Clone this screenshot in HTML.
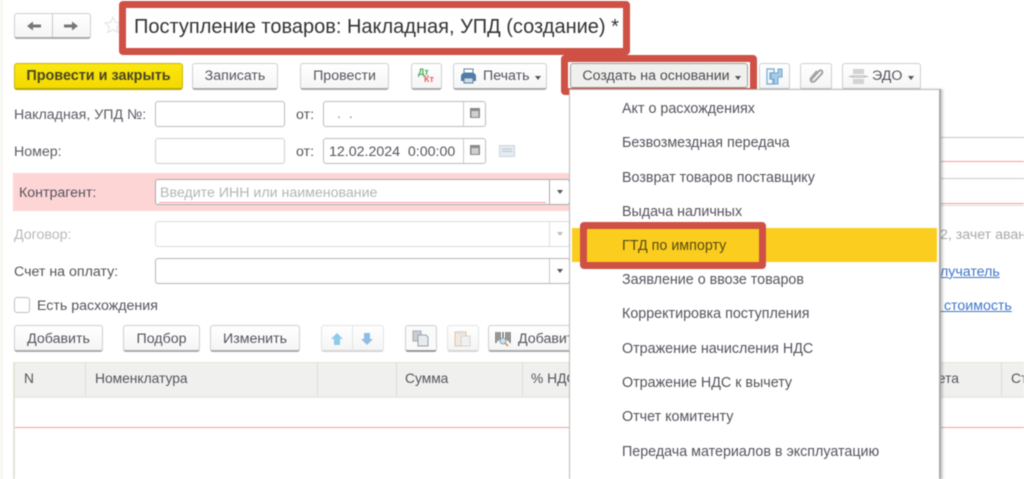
<!DOCTYPE html>
<html lang="ru"><head><meta charset="utf-8"><title>Поступление товаров</title>
<style>
html,body{margin:0;padding:0;background:#fff}
#p{position:relative;width:1024px;height:479px;overflow:hidden;background:#fff;font-family:"Liberation Sans",sans-serif;font-size:14.2px;color:#57535c;filter:blur(.5px)}
#p div,#p span.a,#p svg{position:absolute;box-sizing:border-box}
.b{background:linear-gradient(#fff,#f5f5f5);border:1px solid #cfcfcf;border-bottom:2px solid #aaa;border-radius:3px;height:27px;line-height:25px;text-align:center;white-space:nowrap}
.i{background:#fff;border:1px solid #bdbdbd;border-radius:3px}
.t{white-space:nowrap;line-height:16px;margin-top:1px}
.sep{width:1px;background:#c8c8c8}
.red{border:7px solid #cf5044;border-radius:4px}
.arr{width:0;height:0;border-left:3px solid transparent;border-right:3px solid transparent;border-top:4px solid #555}
.th{background:#f0f0ee;height:33px;top:363px;border-right:1px solid #dcdcda;line-height:31px;padding-left:9px;white-space:nowrap;overflow:hidden;font-size:13.8px}
.m{left:622px;white-space:nowrap;line-height:16px;font-size:14.3px}
.dot{height:1px;background:#f59fa4}
a{color:#3f77c9;text-decoration:underline}
</style></head><body><div id="p">

<div style="left:0;top:0;width:3px;height:479px;background:#f7f6f1"></div>

<!-- nav -->
<div class="b" style="left:14px;top:13px;width:77px;height:26px"></div>
<div class="sep" style="left:52px;top:14px;height:23px"></div>
<svg style="left:26px;top:19px" width="16" height="14" viewBox="0 0 16 14"><path d="M1 7l6-4.500v3h8v3H7v3z" fill="#777"/></svg>
<svg style="left:63px;top:19px" width="16" height="14" viewBox="0 0 16 14"><path d="M15 7L9 2.500v3H1v3h8v3z" fill="#777"/></svg>
<svg style="left:104px;top:16px" width="18" height="18" viewBox="0 0 18 18"><path d="M9 1l2.400 5.400 5.600.6-4.200 3.800 1.200 5.700L9 13.600 4 16.500l1.200-5.700L1 7l5.600-.6z" fill="none" stroke="#e6e6e6" stroke-width="1.200"/></svg>

<div class="t" style="left:134px;top:15px;font-size:20px;line-height:22px;color:#333">Поступление товаров: Накладная, УПД (создание) *</div>
<div class="red" style="left:119px;top:1px;width:511px;height:54px"></div>

<!-- toolbar -->
<div class="b" style="left:14px;top:63px;width:169px;background:linear-gradient(#fbe711,#f3d900);border:1px solid #cdb800;border-bottom:2px solid #b9a700;font-weight:bold;color:#4a4620;font-size:14.4px">Провести и закрыть</div>
<div class="b" style="left:192px;top:63px;width:86px">Записать</div>
<div class="b" style="left:300px;top:63px;width:89px">Провести</div>
<div class="b" style="left:411px;top:63px;width:31px"></div>
<span class="a" style="left:418px;top:68px;font-size:9px;font-weight:bold;color:#48ad5c;line-height:9px">Дт</span>
<span class="a" style="left:424px;top:75px;font-size:9px;font-weight:bold;color:#ef5e5e;line-height:9px">Кт</span>
<div class="b" style="left:453px;top:63px;width:94px;text-align:left;padding-left:29px">Печать</div>
<svg style="left:460px;top:68px" width="17" height="16" viewBox="0 0 17 16"><path d="M4 1h9v4H4z" fill="#fff" stroke="#5d7f9f"/><path d="M1 9q0-4 3-4h9q3 0 3 4v4h-3v-3H4v3H1z" fill="#4f7ca8"/><path d="M4 10h9v5H4z" fill="#cfdbe6" stroke="#5d7f9f"/></svg>
<div class="arr" style="left:535px;top:76px"></div>

<div class="b" style="left:570px;top:63px;width:178px;height:25px;background:#f0f0ee;border:1px solid #9a9a9a;line-height:25px;padding-right:6px;color:#4f4b52">Создать на основании</div>
<div class="arr" style="left:735px;top:76px"></div>
<div class="red" style="left:561px;top:55px;width:196px;height:40px"></div>

<div class="b" style="left:759px;top:63px;width:31px;border-bottom-color:#ccc"></div>
<svg style="left:766px;top:68px" width="17" height="17" viewBox="0 0 17 17"><path d="M1 1h7v4H4v6h3v5H1z" fill="none" stroke="#7fb2d8" stroke-width="1.400"/><path d="M5 5h7V1h4v8h-4v7H8v-5H5z" fill="#a9cce6" stroke="#6fa6d0"/></svg>
<div class="b" style="left:800px;top:63px;width:32px;border-bottom-color:#ccc"></div>
<svg style="left:808px;top:68px" width="16" height="16" viewBox="0 0 16 16"><path d="M3 12L11 3q2-1.500 3 0t-.5 3L7 13q-2 1.500-3.500.5T3 10l6-7" fill="none" stroke="#a3a3a3" stroke-width="2"/></svg>
<div class="b" style="left:842px;top:63px;width:79px;text-align:left;padding-left:29px;border-bottom-color:#ccc">ЭДО</div>
<svg style="left:849px;top:68px" width="19" height="17" viewBox="0 0 19 17"><path d="M4 1h11v5H4zM3 7h13v3H3zM4 11h11v5H4z" fill="#d2d2d2"/><path d="M0 8.500h4M15 8.500h4" stroke="#aaa"/></svg>
<div class="arr" style="left:908px;top:76px"></div>

<!-- row 1 -->
<div class="t" style="left:14px;top:106px;color:#5f5b63">Накладная, УПД №:</div>
<div class="i" style="left:155px;top:101px;width:130px;height:26px"></div>
<div class="t" style="left:296px;top:106px">от:</div>
<div class="i" style="left:323px;top:101px;width:163px;height:26px"></div>
<div class="sep" style="left:463px;top:102px;height:24px"></div>
<div class="t" style="left:337px;top:105px;color:#888">.&nbsp;&nbsp;.</div>
<svg style="left:469px;top:106px" width="12" height="13" viewBox="0 0 12 13"><path d="M1 2h10v10H1z" fill="#8a8a8a"/><path d="M2.500 5h7v6h-7z" fill="#cfcfcf"/></svg>

<!-- row 2 -->
<div class="t" style="left:14px;top:143px;color:#5f5b63">Номер:</div>
<div class="i" style="left:155px;top:138px;width:130px;height:26px;border-color:#cfcfcf"></div>
<div class="t" style="left:296px;top:143px">от:</div>
<div class="i" style="left:323px;top:138px;width:163px;height:26px"></div>
<div class="sep" style="left:463px;top:139px;height:24px"></div>
<div class="t" style="left:329px;top:143px">12.02.2024&nbsp; 0:00:00</div>
<svg style="left:469px;top:143px" width="12" height="13" viewBox="0 0 12 13"><path d="M1 2h10v10H1z" fill="#8a8a8a"/><path d="M2.500 5h7v6h-7z" fill="#cfcfcf"/></svg>
<svg style="left:499px;top:145px" width="16" height="12" viewBox="0 0 16 12"><path d="M.5.500h15v11H.5z" fill="#e6ecf1" stroke="#ccd5dc"/><path d="M3 4h10M3 6.500h10" stroke="#b9c4cd"/></svg>

<!-- Контрагент -->
<div style="left:13px;top:173px;width:557px;height:38px;background:#fdd5d5"></div>
<div class="t" style="left:19px;top:184px">Контрагент:</div>
<div class="i" style="left:155px;top:179px;width:415px;height:26px;border-color:#a9a9a9"></div>
<div class="t" style="left:160px;top:184px;color:#b5b5b5">Введите ИНН или наименование</div>
<div class="dot" style="left:159px;top:202px;width:387px"></div>
<div class="sep" style="left:549px;top:180px;height:24px;background:#aaa"></div>
<div class="arr" style="left:557px;top:190px"></div>

<!-- Договор -->
<div class="t" style="left:14px;top:226px;color:#b9b9b9">Договор:</div>
<div class="i" style="left:155px;top:221px;width:415px;height:26px;border-color:#dcdcdc"></div>
<div class="sep" style="left:549px;top:222px;height:24px;background:#e0e0e0"></div>
<div class="arr" style="left:557px;top:232px;border-top-color:#bbb"></div>

<!-- Счет -->
<div class="t" style="left:14px;top:263px">Счет на оплату:</div>
<div class="i" style="left:155px;top:258px;width:415px;height:26px;border-color:#b5b5b5"></div>
<div class="sep" style="left:549px;top:259px;height:24px"></div>
<div class="arr" style="left:557px;top:269px"></div>

<!-- check -->
<div class="i" style="left:14px;top:297px;width:16px;height:16px;border-color:#c0c0c0"></div>
<div class="t" style="left:37px;top:297px">Есть расхождения</div>

<!-- right fragments -->
<div class="dot" style="left:940px;top:161px;width:84px"></div>
<div style="left:940px;top:137px;width:84px;height:1px;background:#c9c4c4"></div>
<div style="left:940px;top:178px;width:84px;height:1px;background:#c9c9c9"></div>
<div class="dot" style="left:940px;top:203px;width:84px"></div>
<div style="left:940px;top:205px;width:84px;height:1px;background:#ddd"></div>
<div class="t" style="left:940px;top:226px;color:#aaa;width:84px;overflow:hidden">2, зачет аванса</div>
<div class="t" style="left:940px;top:263px;width:84px;overflow:hidden"><a>лучатель</a></div>
<div class="t" style="left:940px;top:297px;width:84px;overflow:hidden"><a>&nbsp;стоимость</a></div>

<!-- table toolbar -->
<div class="b" style="left:14px;top:325px;width:89px;line-height:27px">Добавить</div>
<div class="b" style="left:123px;top:325px;width:77px;line-height:27px">Подбор</div>
<div class="b" style="left:210px;top:325px;width:90px;line-height:27px">Изменить</div>
<div class="b" style="left:321px;top:325px;width:63px;border-color:#e4e4e4;border-bottom-color:#d5d5d5"></div>
<div class="sep" style="left:352px;top:326px;height:25px;background:#e4e4e4"></div>
<svg style="left:330px;top:332px" width="14" height="14" viewBox="0 0 14 14"><path d="M7 1l6 6H10v6H4V7H1z" fill="#8ecbe9"/></svg>
<svg style="left:360px;top:332px" width="14" height="14" viewBox="0 0 14 14"><path d="M7 13l6-6H10V1H4v6H1z" fill="#8dbde6"/></svg>
<div class="b" style="left:405px;top:325px;width:32px;background:#fafafa;border-bottom-color:#999"></div>
<svg style="left:412px;top:330px" width="18" height="17" viewBox="0 0 18 17"><path d="M1 1h8v10H1z" fill="#c9cdd3" stroke="#a5abb2"/><path d="M6 5h8l2 2v9H6z" fill="#e6ebf0" stroke="#98a1aa"/></svg>
<div class="b" style="left:447px;top:325px;width:32px;border-color:#e4e4e4;border-bottom-color:#d5d5d5"></div>
<svg style="left:454px;top:330px" width="18" height="17" viewBox="0 0 18 17"><path d="M1 2h11v14H1z" fill="#f3e9de" stroke="#d9c6b3"/><path d="M4 1h5v3H4z" fill="#ddd"/><path d="M7 6h9v10H7z" fill="#f1f1f1" stroke="#d4d4d4"/></svg>
<div class="b" style="left:488px;top:325px;width:90px;text-align:left;padding-left:29px;line-height:27px">Добавить</div>
<svg style="left:495px;top:331px" width="16" height="16" viewBox="0 0 16 16"><path d="M1 1v11M3 1v9M5 1v8M8 1v6M11 1v8M13 1v9M15 1v11" stroke="#555" stroke-width="1.200"/><circle cx="8" cy="10" r="3" fill="#cfe0ee" stroke="#8aa"/><path d="M10 12l3 3" stroke="#c58b4a" stroke-width="1.500"/></svg>

<!-- table -->
<div style="left:13px;top:362px;width:1011px;height:1px;background:#e5e3d8"></div>
<div style="left:13px;top:362px;width:2px;height:117px;background:#e5e3d8"></div>
<div class="th" style="left:15px;width:71px">N</div>
<div class="th" style="left:86px;width:232px">Номенклатура</div>
<div class="th" style="left:318px;width:79px"></div>
<div class="th" style="left:397px;width:126px;padding-left:8px">Сумма</div>
<div class="th" style="left:523px;width:47px;padding-left:8px;border-right:0">% НДС</div>
<div class="th" style="left:940px;width:62px;padding-left:0;text-indent:-16px">счета</div>
<div class="th" style="left:1002px;width:22px;border-right:0">Ст</div>
<div style="left:15px;top:396px;width:1009px;height:2px;background:#e9e9e9"></div>
<div class="dot" style="left:15px;top:427px;width:1009px"></div>

<!-- menu -->
<div style="left:569px;top:89px;width:372px;height:395px;background:#fff;border:1px solid #b9b9b9;border-right:2px solid #a8a8a8;box-shadow:2px 0 2px rgba(0,0,0,.18)"></div>
<div class="t m" style="top:100px">Акт о расхождениях</div>
<div class="t m" style="top:134px">Безвозмездная передача</div>
<div class="t m" style="top:169px">Возврат товаров поставщику</div>
<div class="t m" style="top:203px">Выдача наличных</div>
<div style="left:572px;top:228px;width:365px;height:34px;background:#fbcd1f"></div>
<div class="t m" style="top:237px;color:#5a4a14">ГТД по импорту</div>
<div class="red" style="left:580px;top:222px;width:186px;height:47px"></div>
<div class="t m" style="top:271px">Заявление о ввозе товаров</div>
<div class="t m" style="top:305px">Корректировка поступления</div>
<div class="t m" style="top:340px">Отражение начисления НДС</div>
<div class="t m" style="top:374px">Отражение НДС к вычету</div>
<div class="t m" style="top:408px">Отчет комитенту</div>
<div class="t m" style="top:443px">Передача материалов в эксплуатацию</div>

</div></body></html>
